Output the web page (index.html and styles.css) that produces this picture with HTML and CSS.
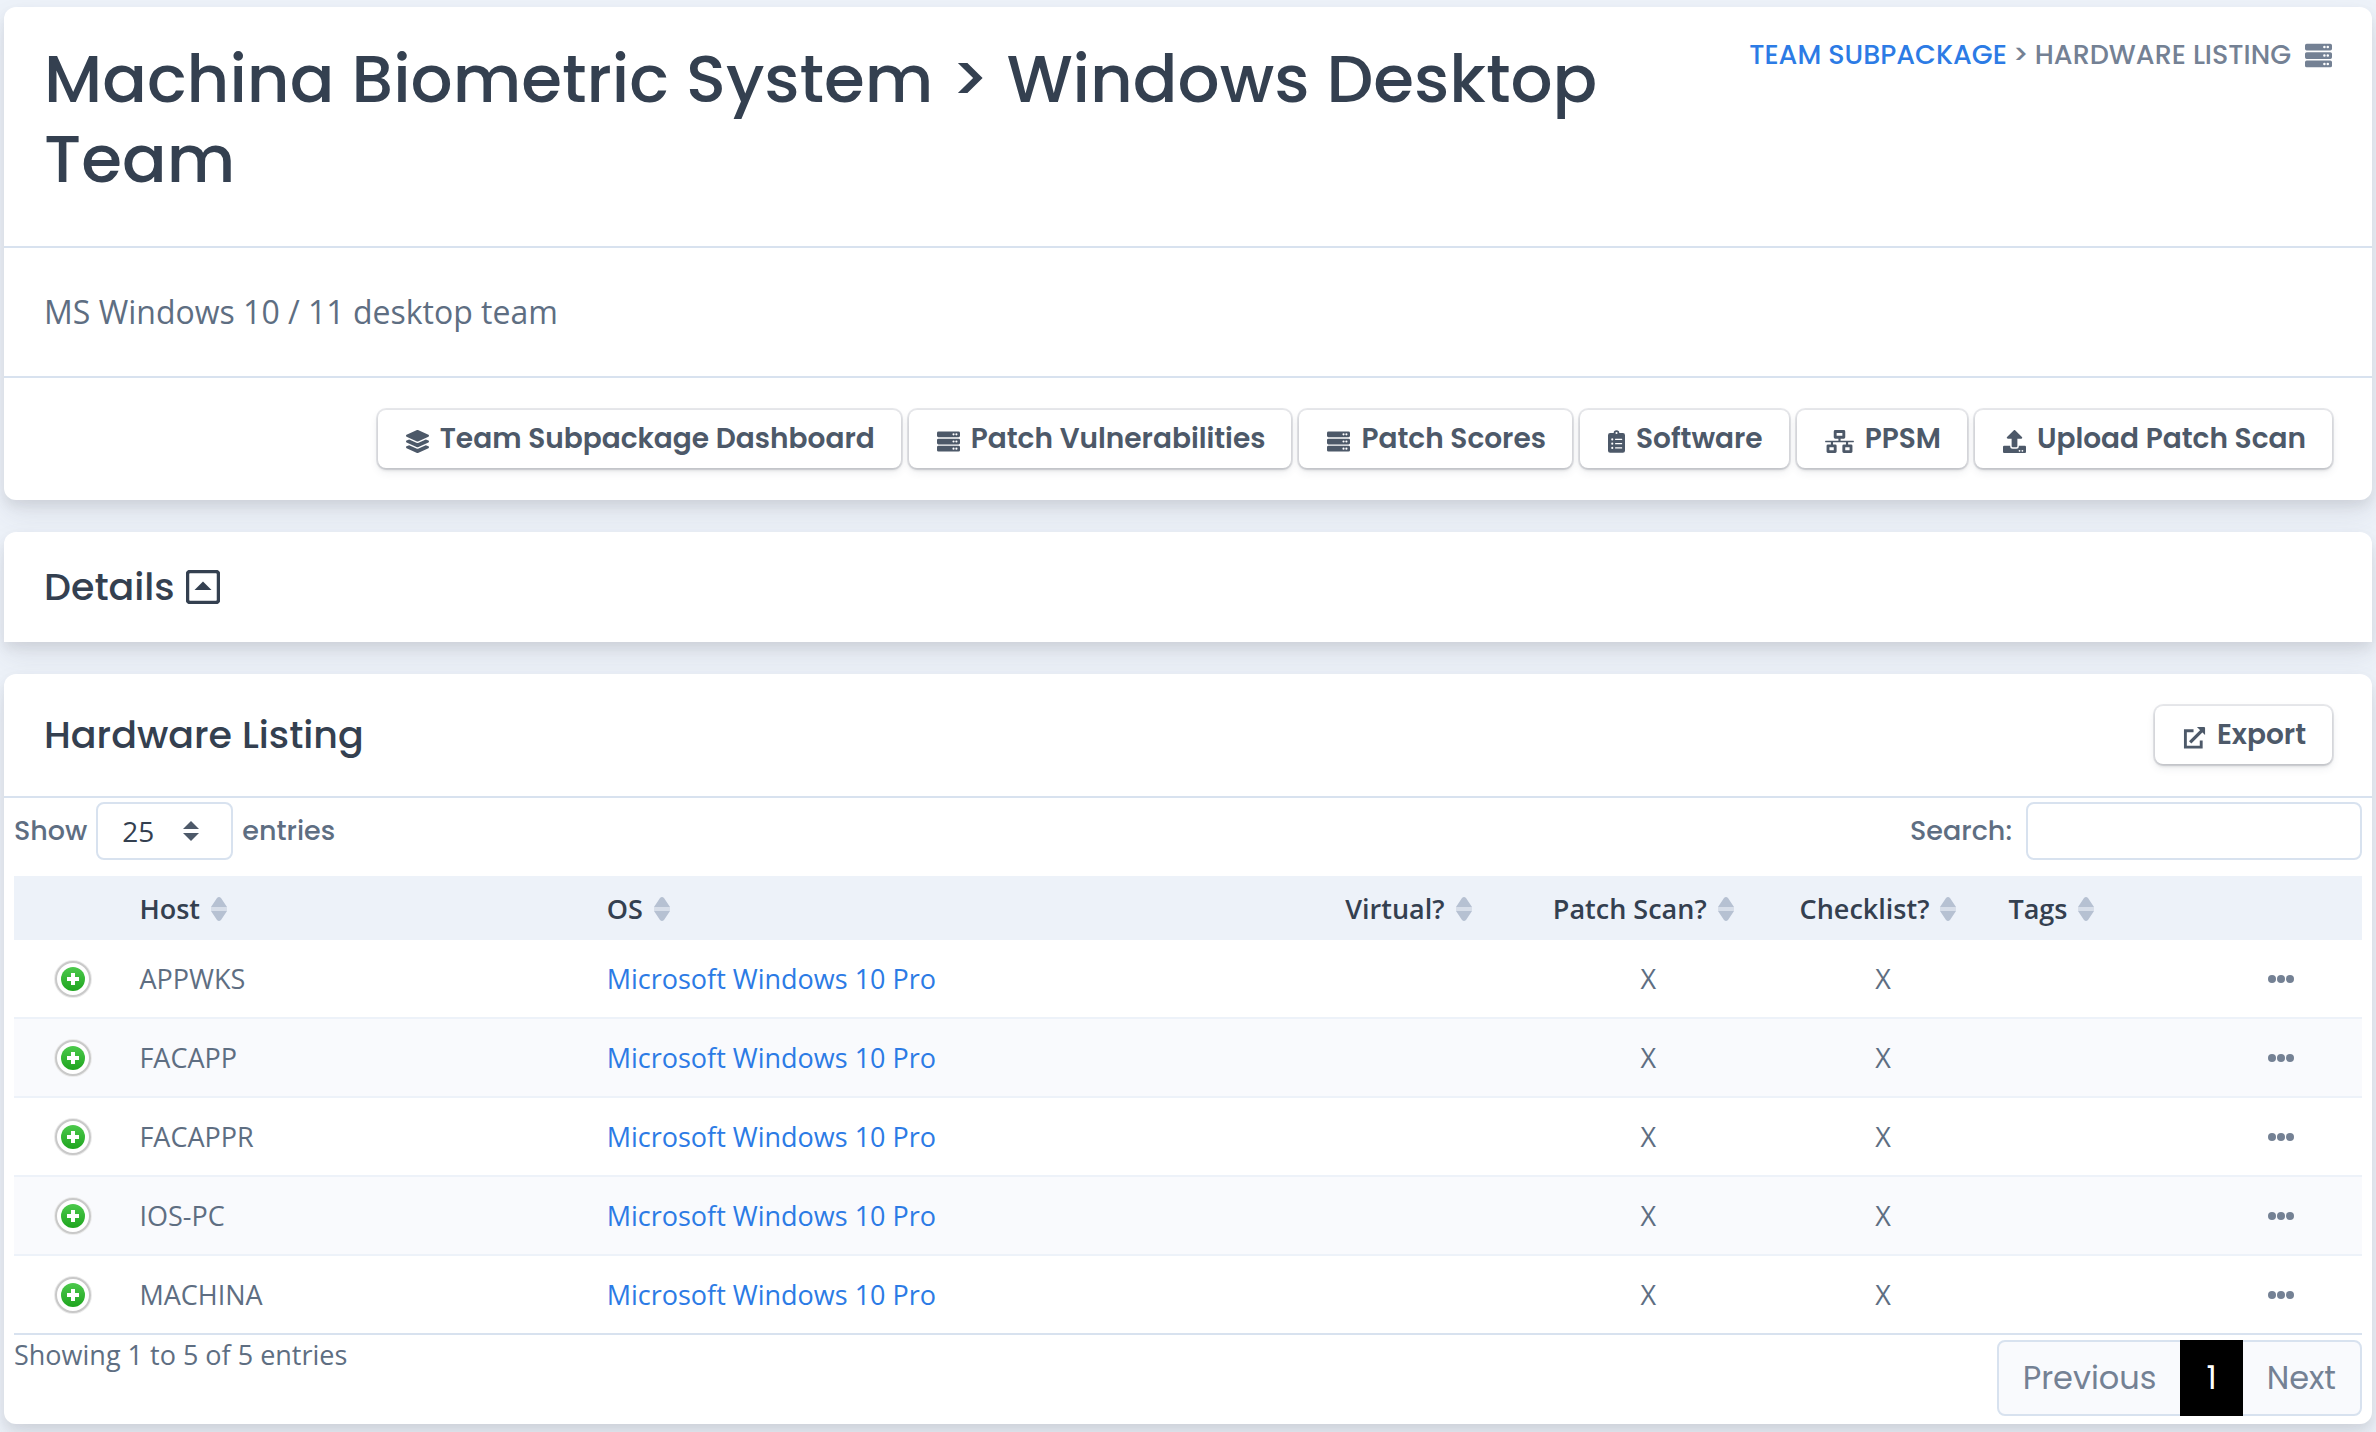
FILE: index.html
```html
<!DOCTYPE html>
<html lang="en">
<head>
<meta charset="utf-8">
<meta name="viewport" content="width=device-width, initial-scale=1">
<title>Hardware Listing</title>
<link rel="stylesheet" href="styles.css">
</head>
<body>
<svg class="sprite" aria-hidden="true">
  <symbol id="server" viewBox="0 0 512 512"><path fill-rule="evenodd" d="M480 160H32a32 32 0 0 1-32-32V64a32 32 0 0 1 32-32h448a32 32 0 0 1 32 32v64a32 32 0 0 1-32 32zm-48-88a24 24 0 1 0 0 48 24 24 0 0 0 0-48zm-64 0a24 24 0 1 0 0 48 24 24 0 0 0 0-48zM480 320H32a32 32 0 0 1-32-32v-64a32 32 0 0 1 32-32h448a32 32 0 0 1 32 32v64a32 32 0 0 1-32 32zm-48-88a24 24 0 1 0 0 48 24 24 0 0 0 0-48zm-64 0a24 24 0 1 0 0 48 24 24 0 0 0 0-48zM480 480H32a32 32 0 0 1-32-32v-64a32 32 0 0 1 32-32h448a32 32 0 0 1 32 32v64a32 32 0 0 1-32 32zm-48-88a24 24 0 1 0 0 48 24 24 0 0 0 0-48zm-64 0a24 24 0 1 0 0 48 24 24 0 0 0 0-48z"/></symbol>
  <symbol id="layers" viewBox="0 0 512 512"><path d="M12.4 148l232.900 105.700c6.800 3.100 14.500 3.100 21.300 0l233-105.700c16.600-7.500 16.600-32.500 0-40L266.600 2.300a25.600 25.600 0 0 0-21.300 0L12.400 108c-16.600 7.500-16.600 32.500 0 40zm487.200 88.300l-58.100-26.300-161.600 73.300c-7.600 3.400-15.600 5.200-23.900 5.200s-16.300-1.700-23.900-5.200L70.500 210l-58.100 26.300c-16.600 7.500-16.600 32.500 0 40l232.900 105.600c6.800 3.100 14.500 3.100 21.300 0l233-105.600c16.600-7.500 16.600-32.500 0-40zm0 127.800l-57.900-26.200-161.800 73.400c-7.600 3.400-15.600 5.200-23.900 5.200s-16.300-1.700-23.900-5.200L70.300 337.900l-57.900 26.200c-16.600 7.500-16.600 32.500 0 40l232.900 105.600c6.800 3.100 14.500 3.100 21.300 0l233-105.600c16.600-7.500 16.600-32.500 0-40z"/></symbol>
  <symbol id="clipboard" viewBox="0 0 384 512"><path fill-rule="evenodd" d="M336 64h-80a64 64 0 0 0-128 0H48a48 48 0 0 0-48 48v352a48 48 0 0 0 48 48h288a48 48 0 0 0 48-48V112a48 48 0 0 0-48-48zM96 424a24 24 0 1 1 0-48 24 24 0 0 1 0 48zm0-96a24 24 0 1 1 0-48 24 24 0 0 1 0 48zm0-96a24 24 0 1 1 0-48 24 24 0 0 1 0 48zm96-192a24 24 0 1 1 0 48 24 24 0 0 1 0-48zm128 368a8 8 0 0 1-8 8H168a8 8 0 0 1-8-8v-16a8 8 0 0 1 8-8h144a8 8 0 0 1 8 8v16zm0-96a8 8 0 0 1-8 8H168a8 8 0 0 1-8-8v-16a8 8 0 0 1 8-8h144a8 8 0 0 1 8 8v16zm0-96a8 8 0 0 1-8 8H168a8 8 0 0 1-8-8v-16a8 8 0 0 1 8-8h144a8 8 0 0 1 8 8v16z"/></symbol>
  <symbol id="network" viewBox="0 0 640 512"><path fill-rule="evenodd" d="M640 264v-16a8 8 0 0 0-8-8H344v-48h72a32 32 0 0 0 32-32V32a32 32 0 0 0-32-32H224a32 32 0 0 0-32 32v128a32 32 0 0 0 32 32h72v48H8a8 8 0 0 0-8 8v16a8 8 0 0 0 8 8h120v48H64a32 32 0 0 0-32 32v128a32 32 0 0 0 32 32h160a32 32 0 0 0 32-32V352a32 32 0 0 0-32-32h-48v-48h288v48h-48a32 32 0 0 0-32 32v128a32 32 0 0 0 32 32h160a32 32 0 0 0 32-32V352a32 32 0 0 0-32-32h-64v-48h120a8 8 0 0 0 8-8zM256 128V64h128v64zM192 448H96v-64h96zm352 0h-96v-64h96z"/></symbol>
  <symbol id="upload" viewBox="0 0 512 512"><path fill-rule="evenodd" d="M296 384h-80a24 24 0 0 1-24-24V192h-87.700c-17.800 0-26.700-21.500-14.100-34.100L242.300 5.700a19.400 19.400 0 0 1 27.300 0l152.200 152.200c12.600 12.600 3.700 34.100-14.100 34.100H320v168a24 24 0 0 1-24 24zm216-8v112a24 24 0 0 1-24 24H24a24 24 0 0 1-24-24V376a24 24 0 0 1 24-24h136v8a56 56 0 0 0 56 56h80a56 56 0 0 0 56-56v-8h136a24 24 0 0 1 24 24zm-124 88a20 20 0 1 0-40 0 20 20 0 0 0 40 0zm64 0a20 20 0 1 0-40 0 20 20 0 0 0 40 0z"/></symbol>
  <symbol id="external" viewBox="0 0 24 24"><path fill="none" stroke="currentColor" stroke-width="3" d="M11 5H2.500v17H19v-7"/><path fill="none" stroke="currentColor" stroke-width="3.400" d="M7.500 17L20 4.500"/><path d="M14.500 1H22a1 1 0 0 1 1 1v7.500z"/></symbol>
  <symbol id="caret-box" viewBox="0 0 34 34"><rect x="1.500" y="1.500" width="31" height="31" rx="2.500" fill="none" stroke="currentColor" stroke-width="3.500"/><path d="M8.500 20L17 11.500 25.500 20z"/></symbol>
  <symbol id="sort" viewBox="0 0 16 24"><path d="M0 10L6 1a3 3 0 0 1 4 0l6 9zM0 14h16l-6 9a3 3 0 0 1-4 0z"/><path opacity=".4" d="M0 10h16v4H0z"/></symbol>
  <symbol id="dots" viewBox="0 0 26 8"><circle cx="4" cy="4" r="4"/><circle cx="13" cy="4" r="4"/><circle cx="22" cy="4" r="4"/></symbol>
  <symbol id="plus" viewBox="0 0 40 40"><circle cx="20" cy="20" r="17" fill="#fff" stroke="#ececec" stroke-width="4"/><circle cx="20" cy="20" r="17" fill="#fff" stroke="#c9c9c9" stroke-width="2"/><circle cx="20" cy="20" r="12" fill="url(#green)"/><path fill="#fff" d="M18 14h4v4h4v4h-4v4h-4v-4h-4v-4h4z"/></symbol>
  <defs><linearGradient id="green" x1="0" y1="0" x2="0" y2="1"><stop offset="0" stop-color="#4cc94c"/><stop offset="1" stop-color="#1fa51f"/></linearGradient></defs>
</svg>

<main class="page">
  <section class="card">
    <header class="title-row">
      <h1>Machina Biometric System &gt; Windows Desktop Team</h1>
      <nav class="crumbs" aria-label="Breadcrumb"><a href="#">TEAM SUBPACKAGE</a> <span>&gt;</span> <span>HARDWARE LISTING</span> <svg class="crumb-icon"><use href="#server"/></svg></nav>
    </header>
    <p class="description">MS Windows 10 / 11 desktop team</p>
    <div class="actions">
      <button type="button" class="btn"><svg class="icon"><use href="#layers"/></svg>Team Subpackage Dashboard</button>
      <button type="button" class="btn"><svg class="icon"><use href="#server"/></svg>Patch Vulnerabilities</button>
      <button type="button" class="btn"><svg class="icon"><use href="#server"/></svg>Patch Scores</button>
      <button type="button" class="btn"><svg class="icon icon-narrow"><use href="#clipboard"/></svg>Software</button>
      <button type="button" class="btn"><svg class="icon icon-wide"><use href="#network"/></svg>PPSM</button>
      <button type="button" class="btn"><svg class="icon"><use href="#upload"/></svg>Upload Patch Scan</button>
    </div>
  </section>

  <section class="card card-flat">
    <h2 class="details">Details <svg class="caret"><use href="#caret-box"/></svg></h2>
  </section>

  <section class="card">
    <header class="listing-head">
      <h2>Hardware Listing</h2>
      <button type="button" class="btn"><svg class="icon"><use href="#external"/></svg>Export</button>
    </header>
    <div class="listing">
      <div class="controls">
        <label class="length">Show
          <select class="select"><option>10</option><option selected>25</option><option>50</option></select>
          entries</label>
        <label class="search">Search: <input type="search" class="field"></label>
      </div>
      <table>
        <colgroup><col class="c-toggle"><col class="c-host"><col><col class="c-flag"><col class="c-flag"><col class="c-flag"><col class="c-tags"><col class="c-menu"></colgroup>
        <thead><tr>
          <th></th>
          <th><span class="sortable">Host<svg><use href="#sort"/></svg></span></th>
          <th><span class="sortable">OS<svg><use href="#sort"/></svg></span></th>
          <th class="center"><span class="sortable">Virtual?<svg><use href="#sort"/></svg></span></th>
          <th class="center"><span class="sortable">Patch Scan?<svg><use href="#sort"/></svg></span></th>
          <th class="center"><span class="sortable">Checklist?<svg><use href="#sort"/></svg></span></th>
          <th><span class="sortable">Tags<svg><use href="#sort"/></svg></span></th>
          <th></th>
        </tr></thead>
        <tbody>
          <tr><td><button type="button" class="plain" aria-label="Expand APPWKS"><svg class="plus"><use href="#plus"/></svg></button></td><td>APPWKS</td><td><a href="#">Microsoft Windows 10 Pro</a></td><td></td><td class="center">X</td><td class="center">X</td><td></td><td><button type="button" class="plain" aria-label="Actions for APPWKS"><svg class="dots"><use href="#dots"/></svg></button></td></tr>
          <tr><td><button type="button" class="plain" aria-label="Expand FACAPP"><svg class="plus"><use href="#plus"/></svg></button></td><td>FACAPP</td><td><a href="#">Microsoft Windows 10 Pro</a></td><td></td><td class="center">X</td><td class="center">X</td><td></td><td><button type="button" class="plain" aria-label="Actions for FACAPP"><svg class="dots"><use href="#dots"/></svg></button></td></tr>
          <tr><td><button type="button" class="plain" aria-label="Expand FACAPPR"><svg class="plus"><use href="#plus"/></svg></button></td><td>FACAPPR</td><td><a href="#">Microsoft Windows 10 Pro</a></td><td></td><td class="center">X</td><td class="center">X</td><td></td><td><button type="button" class="plain" aria-label="Actions for FACAPPR"><svg class="dots"><use href="#dots"/></svg></button></td></tr>
          <tr><td><button type="button" class="plain" aria-label="Expand IOS-PC"><svg class="plus"><use href="#plus"/></svg></button></td><td>IOS-PC</td><td><a href="#">Microsoft Windows 10 Pro</a></td><td></td><td class="center">X</td><td class="center">X</td><td></td><td><button type="button" class="plain" aria-label="Actions for IOS-PC"><svg class="dots"><use href="#dots"/></svg></button></td></tr>
          <tr><td><button type="button" class="plain" aria-label="Expand MACHINA"><svg class="plus"><use href="#plus"/></svg></button></td><td>MACHINA</td><td><a href="#">Microsoft Windows 10 Pro</a></td><td></td><td class="center">X</td><td class="center">X</td><td></td><td><button type="button" class="plain" aria-label="Actions for MACHINA"><svg class="dots"><use href="#dots"/></svg></button></td></tr>
        </tbody>
      </table>
      <footer class="listing-foot">
        <p>Showing 1 to 5 of 5 entries</p>
        <nav class="pager" aria-label="Pages">
          <a href="#">Previous</a><a href="#" class="current" aria-current="page">1</a><a href="#">Next</a>
        </nav>
      </footer>
    </div>
  </section>
</main>
</body>
</html>
```
FILE: styles.css
```css
:root {
  --display: Poppins, Inter, sans-serif;
  --text: "Open Sans", sans-serif;
  --heading: #344050;
  --body: #5e6e82;
  --muted: #748194;
  --link: #2c7be5;
  --line: #d8e2ef;
  --bg: #edf2f9;
}
* { box-sizing: border-box; }
body { margin: 0; background: var(--bg); color: var(--body); font: 27px/40px var(--text); }
h1, h2, p { margin: 0; }
a { color: var(--link); text-decoration: none; }
svg { fill: currentColor; flex: none; }
.sprite { position: absolute; width: 0; height: 0; }

.page { display: flex; flex-direction: column; gap: 32px; padding: 7px 4px 8px; }
.card { background: #fff; border-radius: 12px; box-shadow: 0 14px 28px rgba(65, 69, 88, .1), 0 6px 12px rgba(0, 0, 0, .07); }
.card-flat { border-radius: 12px 12px 0 0; }

h1, h2 { color: var(--heading); font-family: var(--display); font-weight: 500; }
h1 { flex: 0 1 1600px; font-size: 66px; line-height: 80px; }
h2 { font-size: 38px; line-height: 46px; }

.title-row { display: flex; justify-content: space-between; align-items: flex-start; gap: 40px; padding: 32px 40px 47px; border-bottom: 2px solid var(--line); }
.crumbs { display: flex; align-items: center; gap: 6px; line-height: 32px; color: var(--muted); font-family: var(--display); font-weight: 500; white-space: nowrap; }
.crumb-icon { width: 27px; height: 27px; margin-left: 8px; }
.description { padding: 40px; border-bottom: 2px solid var(--line); font-size: 32px; line-height: 48px; }
.actions { display: flex; flex-wrap: wrap; justify-content: flex-end; gap: 8px; padding: 32px 40px; }

.btn { display: inline-flex; align-items: center; gap: 11px; height: 58px; padding: 0 26px 0 28px; border: 0; border-radius: 8px; background: #fff; color: #4d5969; font: 600 28px/40px var(--display); white-space: nowrap; box-shadow: 0 0 0 2px rgba(43, 45, 80, .1), 0 4px 10px rgba(43, 45, 80, .08), 0 2px 3px rgba(0, 0, 0, .07), 0 2px 4px rgba(0, 0, 0, .08); }
.icon { width: 23px; height: 23px; margin-top: 4px; }
.icon-narrow { width: 17px; }
.icon-wide { width: 29px; }

.details { display: flex; align-items: center; gap: 11px; padding: 32px 40px; }
.caret { width: 34px; height: 34px; }

.listing-head { display: flex; justify-content: space-between; align-items: center; padding: 32px 40px; border-bottom: 2px solid var(--line); }
.listing { padding: 4px 10px 8px; }
.controls { display: flex; justify-content: space-between; margin-bottom: 16px; font-family: var(--display); font-weight: 500; }
.length, .search { display: flex; align-items: center; gap: 9px; }
.search { gap: 14px; }
.select, .field { height: 58px; border: 2px solid var(--line); border-radius: 8px; background: #fff; color: var(--heading); font: 28px/40px var(--text); }
.select { width: 137px; padding: 0 24px; appearance: none; background: #fff url("data:image/svg+xml,%3Csvg xmlns='http://www.w3.org/2000/svg' viewBox='0 0 16 20'%3E%3Cpath fill='%234d5969' d='M0 8l8-8 8 8zM0 12h16l-8 8z'/%3E%3C/svg%3E") no-repeat right 32px center / 16px 20px; }
.field { width: 336px; padding: 0 16px; }

table { width: 100%; table-layout: fixed; border-collapse: separate; border-spacing: 0; border-bottom: 2px solid var(--line); }
.c-toggle { width: 5%; }
.c-host { width: 19.9%; }
.c-flag { width: 10%; }
.c-tags { width: 8.5%; }
.c-menu { width: 6.9%; }
th { height: 64px; padding: 0 8px; background: var(--bg); color: var(--heading); font-weight: 600; text-align: left; }
td { height: 79px; padding: 0 8px; border-top: 2px solid var(--bg); }
tbody tr:first-child td { height: 77px; border-top: 0; }
tbody tr:nth-child(even) { background: #f9fafd; }
th.center { padding-right: 18px; }
.center { text-align: center; }
.sortable { display: inline-flex; align-items: center; gap: 11px; vertical-align: middle; }
.sortable svg { width: 16px; height: 24px; color: #b6c1d2; }
.plain { display: flex; margin: 0 auto; padding: 0; border: 0; background: none; color: var(--muted); }
.plus { width: 40px; height: 40px; }
.dots { width: 26px; height: 8px; }

.listing-foot { display: flex; justify-content: space-between; align-items: flex-start; }
.pager { display: flex; margin-top: 5px; border: 2px solid var(--line); border-radius: 8px; background: #f9fafd; font: 32px/48px var(--display); }
.pager a { padding: 12px 24px; color: var(--muted); }
.pager .current { margin: -2px 0; padding: 14px 26px; background: #000; color: #fff; }
```
